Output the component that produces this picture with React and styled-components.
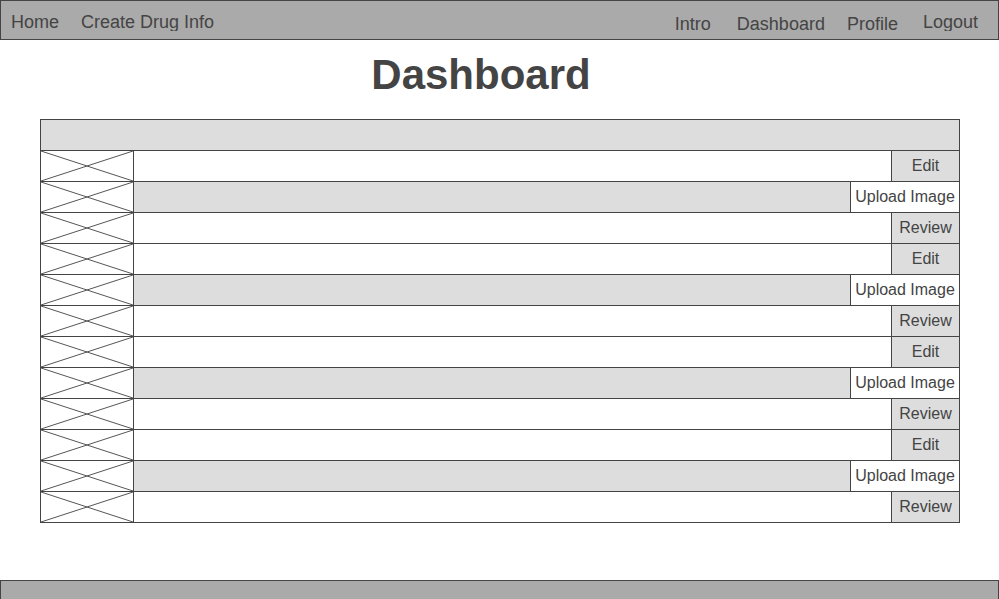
import React from "react";
import styled, { createGlobalStyle } from "styled-components";

const GlobalStyle = createGlobalStyle`
  html, body {
    margin: 0;
    padding: 0;
    overflow: hidden;
    background: #fff;
    font-family: "Liberation Sans", Arial, sans-serif;
    color: #444;
  }
  * {
    box-sizing: border-box;
  }
`;

const rows = [
  "Edit",
  "Upload Image",
  "Review",
  "Edit",
  "Upload Image",
  "Review",
  "Edit",
  "Upload Image",
  "Review",
  "Edit",
  "Upload Image",
  "Review",
];

const PlaceholderImage = () => (
  <Thumb viewBox="0 0 92 30" preserveAspectRatio="none">
    <line x1="0" y1="0" x2="92" y2="30" vectorEffect="non-scaling-stroke" />
    <line x1="0" y1="30" x2="92" y2="0" vectorEffect="non-scaling-stroke" />
  </Thumb>
);

const App = () => {
  return (
    <Page>
      <GlobalStyle />
      <NavBar>
        <NavGroup>
          <NavLink>Home</NavLink>
          <NavLink $ml={22}>Create Drug Info</NavLink>
        </NavGroup>
        <NavGroup $right>
          <NavLink $top={15}>Intro</NavLink>
          <NavLink $top={15} $ml={26}>
            Dashboard
          </NavLink>
          <NavLink $top={15} $ml={22}>
            Profile
          </NavLink>
          <NavLink $top={13} $ml={25}>
            Logout
          </NavLink>
        </NavGroup>
      </NavBar>

      <Title>Dashboard</Title>

      <Table>
        <HeaderRow />
        {rows.map((label, i) => {
          const upload = label === "Upload Image";
          return (
            <Row key={i}>
              <ImageCell>
                <PlaceholderImage />
              </ImageCell>
              <MainCell $shaded={upload} />
              <ActionCell $shaded={!upload} $wide={upload}>
                {label}
              </ActionCell>
            </Row>
          );
        })}
      </Table>

      <Footer />
    </Page>
  );
};

const Page = styled.div`
  width: 999px;
  min-height: 599px;
`;

const NavBar = styled.nav`
  display: flex;
  justify-content: space-between;
  height: 40px;
  background: #aaa;
  border: 1px solid #444;
`;

const NavGroup = styled.div`
  display: flex;
  align-items: flex-start;
  padding: ${(p) => (p.$right ? "0 20px 0 0" : "0 0 0 10px")};
`;

const NavLink = styled.a`
  display: block;
  margin-top: ${(p) => p.$top ?? 13}px;
  margin-left: ${(p) => p.$ml ?? 0}px;
  height: 17px;
  line-height: 17px;
  overflow: hidden;
  font-size: 18px;
  color: #444;
  text-decoration: none;
  white-space: nowrap;
  cursor: pointer;
`;

const Title = styled.h1`
  margin: 11px 0 20px;
  padding-right: 37px;
  text-align: center;
  font-size: 42px;
  font-weight: 700;
  color: #444;
`;

const Table = styled.div`
  width: 920px;
  margin-left: 40px;
  border: 1px solid #444;
`;

const HeaderRow = styled.div`
  height: 30px;
  background: #ddd;
`;

const Row = styled.div`
  display: flex;
  height: 31px;
  border-top: 1px solid #444;
`;

const ImageCell = styled.div`
  width: 93px;
  flex: none;
  border-right: 1px solid #444;
  background: #fff;
`;

const Thumb = styled.svg`
  display: block;
  width: 92px;
  height: 30px;

  line {
    stroke: #555;
    stroke-width: 1;
  }
`;

const MainCell = styled.div`
  flex: 1;
  background: ${(p) => (p.$shaded ? "#ddd" : "#fff")};
`;

const ActionCell = styled.div`
  flex: none;
  width: ${(p) => (p.$wide ? 109 : 68)}px;
  border-left: 1px solid #444;
  background: ${(p) => (p.$shaded ? "#ddd" : "#fff")};
  font-size: 16px;
  line-height: 30px;
  text-align: center;
  color: #444;
  white-space: nowrap;
`;

const Footer = styled.footer`
  margin-top: 57px;
  height: 40px;
  background: #aaa;
  border: 1px solid #444;
`;

export default App;
